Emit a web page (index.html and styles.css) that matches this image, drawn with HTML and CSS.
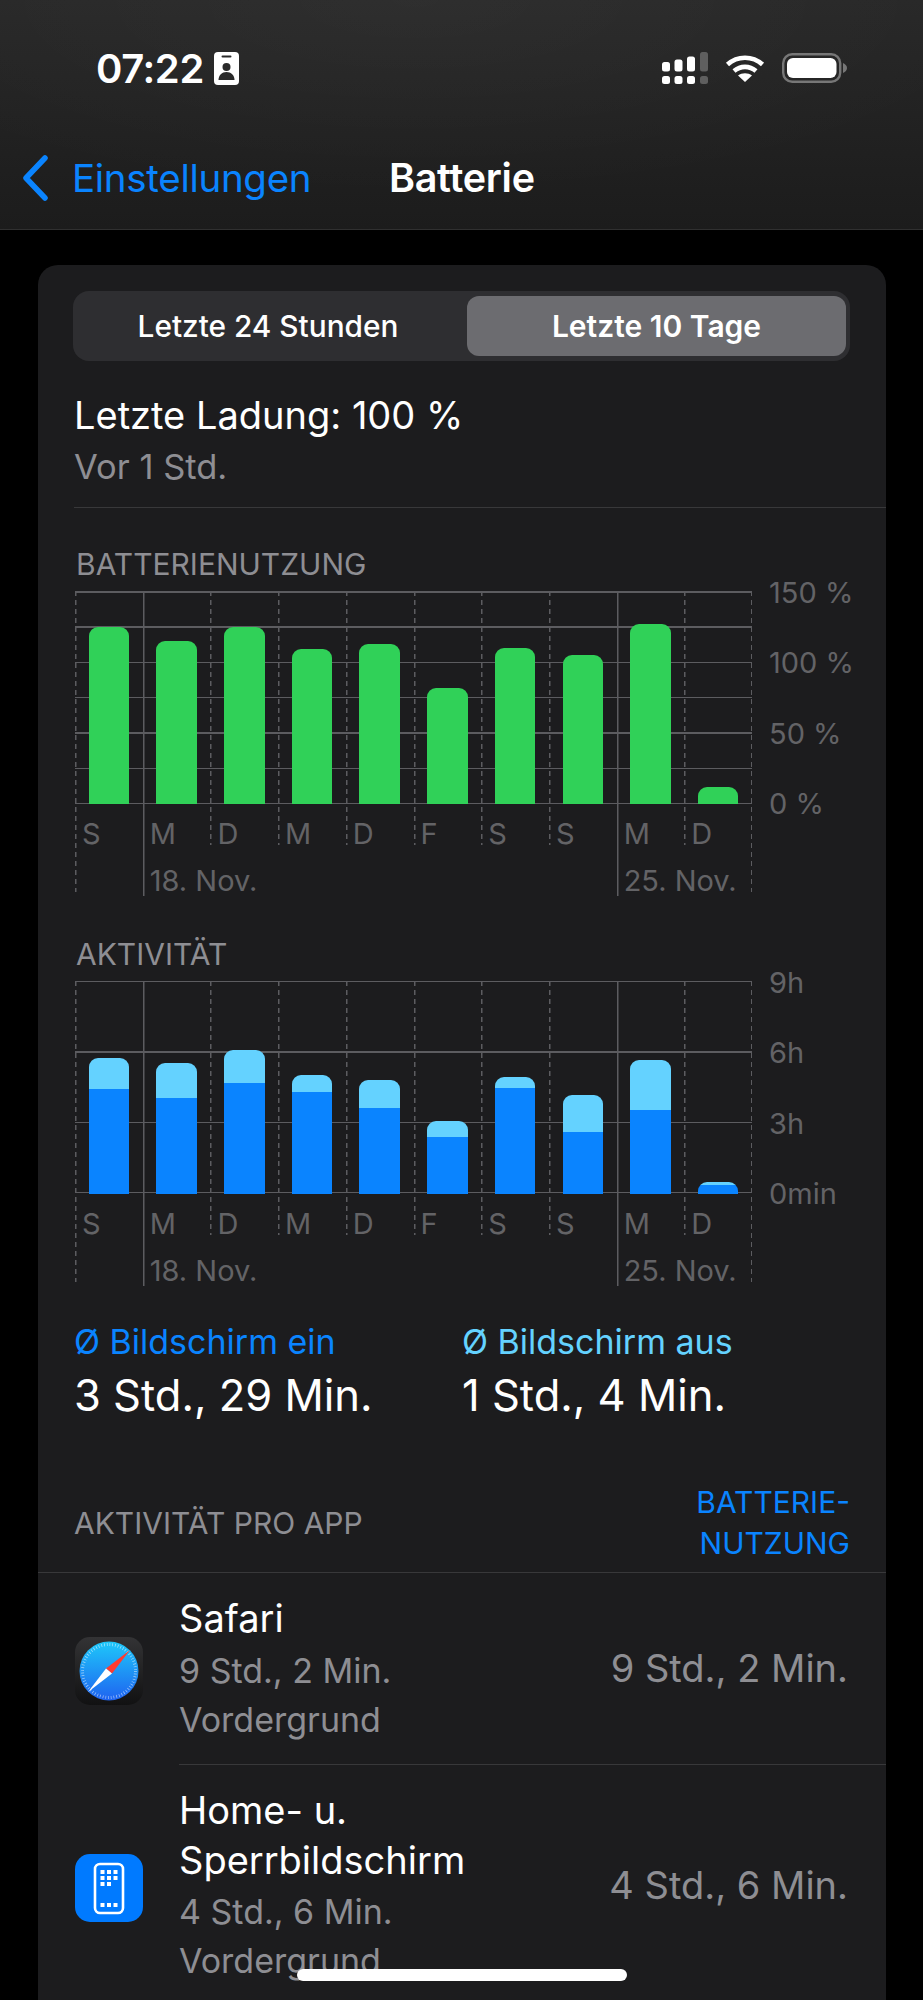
FILE: index.html
```html
<!DOCTYPE html>
<html lang="de">
<head>
<meta charset="utf-8">
<title>Batterie</title>
<link rel="stylesheet" href="styles.css">
</head>
<body>
<div class="screen">
  <header class="topbar">
    <div class="status">
      <div class="status-left">
        <span class="clock">07:22</span>
        <svg class="badge" viewBox="0 0 25 33" width="25" height="33"><rect width="25" height="33" rx="4" fill="#fff"/><rect x="7.5" y="3.5" width="10" height="2" rx="1" fill="#2a2a2a"/><circle cx="12.5" cy="15" r="4" fill="#2a2a2a"/><path d="M4.5 28c0-5 3.5-8 8-8s8 3 8 8z" fill="#2a2a2a"/></svg>
      </div>
      <div class="status-right">
        <svg class="signal" viewBox="0 0 46 32" width="46" height="32"><g fill="#fff"><rect x="0" y="10" width="8" height="9.500" rx="2.500"/><rect x="12.500" y="7.500" width="8" height="12" rx="2.500"/><rect x="25" y="4.500" width="8" height="15" rx="2.500"/><rect x="0" y="24" width="8" height="8" rx="2.500"/><rect x="12.500" y="24" width="8" height="8" rx="2.500"/><rect x="25" y="24" width="8" height="8" rx="2.500"/></g><g fill="#5f5f5f"><rect x="38" y="0" width="8" height="19.500" rx="2.500"/><rect x="38" y="24" width="8" height="8" rx="2.500"/></g></svg>
        <svg class="wifi" viewBox="0 0 40 30" width="40" height="30"><g fill="none" stroke="#fff" stroke-width="4.600"><path d="M2.500 11.500c10-9 25-9 35 0"/><path d="M9 18c6.500-5.500 15.500-5.500 22 0"/></g><path d="M20 29l-7-6.500c4-3 10-3 14 0z" fill="#fff"/></svg>
        <svg class="battery" viewBox="0 0 65 30" width="65" height="30"><rect x="1.200" y="1.200" width="57" height="27.600" rx="9" fill="none" stroke="#777" stroke-width="2.400"/><rect x="5" y="5" width="49.500" height="20" rx="6" fill="#fff"/><path d="M61 10c2.500 1 4 3 4 5s-1.500 4-4 5z" fill="#777"/></svg>
      </div>
    </div>
    <nav class="navbar">
      <svg class="chevron" viewBox="0 0 28 46" width="28" height="46"><path d="M24 3L5 23l19 20" fill="none" stroke="#0a84ff" stroke-width="5.500" stroke-linecap="round" stroke-linejoin="round"/></svg>
      <span class="back">Einstellungen</span>
      <span class="title">Batterie</span>
    </nav>
  </header>

  <main class="card">
    <div class="segments">
      <div class="segment">Letzte 24 Stunden</div>
      <div class="segment segment-on">Letzte 10 Tage</div>
    </div>
    <div class="charge">
      <div class="charge-main">Letzte Ladung: 100 %</div>
      <div class="charge-sub">Vor 1 Std.</div>
    </div>

    <section class="chart-block">
      <h2 class="chart-title">BATTERIENUTZUNG</h2>
      <div class="chart">
        <div class="days days-battery">
          <div class="day day-long"><div class="plot"><div class="bar green" style="height:177px"></div></div><div class="dow">S</div></div>
          <div class="day day-week"><div class="plot"><div class="bar green" style="height:163px"></div></div><div class="dow">M</div><div class="month">18. Nov.</div></div>
          <div class="day"><div class="plot"><div class="bar green" style="height:177px"></div></div><div class="dow">D</div></div>
          <div class="day"><div class="plot"><div class="bar green" style="height:155px"></div></div><div class="dow">M</div></div>
          <div class="day"><div class="plot"><div class="bar green" style="height:160px"></div></div><div class="dow">D</div></div>
          <div class="day"><div class="plot"><div class="bar green" style="height:116px"></div></div><div class="dow">F</div></div>
          <div class="day"><div class="plot"><div class="bar green" style="height:156px"></div></div><div class="dow">S</div></div>
          <div class="day"><div class="plot"><div class="bar green" style="height:149px"></div></div><div class="dow">S</div></div>
          <div class="day day-week"><div class="plot"><div class="bar green" style="height:180px"></div></div><div class="dow">M</div><div class="month">25. Nov.</div></div>
          <div class="day day-last"><div class="plot"><div class="bar green" style="height:17px"></div></div><div class="dow">D</div></div>
        </div>
        <div class="axis"><span>150 %</span><span>100 %</span><span>50 %</span><span>0 %</span></div>
      </div>
    </section>

    <section class="chart-block chart-block-second">
      <h2 class="chart-title">AKTIVITÄT</h2>
      <div class="chart">
        <div class="days days-activity">
          <div class="day day-long"><div class="plot"><div class="bar stack"><i class="light" style="height:31px"></i><i class="blue" style="height:105px"></i></div></div><div class="dow">S</div></div>
          <div class="day day-week"><div class="plot"><div class="bar stack"><i class="light" style="height:35px"></i><i class="blue" style="height:96px"></i></div></div><div class="dow">M</div><div class="month">18. Nov.</div></div>
          <div class="day"><div class="plot"><div class="bar stack"><i class="light" style="height:33px"></i><i class="blue" style="height:111px"></i></div></div><div class="dow">D</div></div>
          <div class="day"><div class="plot"><div class="bar stack"><i class="light" style="height:17px"></i><i class="blue" style="height:102px"></i></div></div><div class="dow">M</div></div>
          <div class="day"><div class="plot"><div class="bar stack"><i class="light" style="height:28px"></i><i class="blue" style="height:86px"></i></div></div><div class="dow">D</div></div>
          <div class="day"><div class="plot"><div class="bar stack"><i class="light" style="height:16px"></i><i class="blue" style="height:57px"></i></div></div><div class="dow">F</div></div>
          <div class="day"><div class="plot"><div class="bar stack"><i class="light" style="height:11px"></i><i class="blue" style="height:106px"></i></div></div><div class="dow">S</div></div>
          <div class="day"><div class="plot"><div class="bar stack"><i class="light" style="height:37px"></i><i class="blue" style="height:62px"></i></div></div><div class="dow">S</div></div>
          <div class="day day-week"><div class="plot"><div class="bar stack"><i class="light" style="height:50px"></i><i class="blue" style="height:84px"></i></div></div><div class="dow">M</div><div class="month">25. Nov.</div></div>
          <div class="day day-last"><div class="plot"><div class="bar stack"><i class="light" style="height:3px"></i><i class="blue" style="height:9px"></i></div></div><div class="dow">D</div></div>
        </div>
        <div class="axis"><span>9h</span><span>6h</span><span>3h</span><span>0min</span></div>
      </div>
    </section>

    <section class="averages">
      <div class="average">
        <div class="average-label label-on">Ø Bildschirm ein</div>
        <div class="average-value">3 Std., 29 Min.</div>
      </div>
      <div class="average">
        <div class="average-label label-off">Ø Bildschirm aus</div>
        <div class="average-value">1 Std., 4 Min.</div>
      </div>
    </section>

    <div class="apps-head">
      <span class="apps-title">AKTIVITÄT PRO APP</span>
      <span class="apps-link">BATTERIE-<br>NUTZUNG</span>
    </div>

    <div class="app-row app-row-safari">
      <svg class="app-icon" viewBox="0 0 68 68" width="68" height="68">
        <defs>
          <linearGradient id="tile" x1="0" y1="0" x2="0" y2="1"><stop offset="0" stop-color="#333335"/><stop offset="1" stop-color="#111112"/></linearGradient>
          <linearGradient id="dial" x1="0" y1="0" x2="0" y2="1"><stop offset="0" stop-color="#1ec8fa"/><stop offset="1" stop-color="#1f63f0"/></linearGradient>
        </defs>
        <rect width="68" height="68" rx="15" fill="url(#tile)"/>
        <circle cx="34" cy="34" r="29.500" fill="url(#dial)"/>
        <circle cx="34" cy="34" r="26.500" fill="none" stroke="#fff" stroke-opacity=".6" stroke-width="3" stroke-dasharray="0.700 2.070"/>
        <path d="M55 13L37 36.500 31 31.500z" fill="#ff3b30"/>
        <path d="M13 55L31 31.500 37 36.500z" fill="#fff"/>
      </svg>
      <div class="app-body">
        <div class="app-text">
          <div class="app-name">Safari</div>
          <div class="app-meta">9 Std., 2 Min.</div>
          <div class="app-meta">Vordergrund</div>
        </div>
        <div class="app-time">9 Std., 2 Min.</div>
      </div>
    </div>

    <div class="app-row app-row-home">
      <svg class="app-icon" viewBox="0 0 68 68" width="68" height="68">
        <rect width="68" height="68" rx="15" fill="#007aff"/>
        <rect x="20" y="10" width="28" height="49" rx="5" fill="none" stroke="#fff" stroke-width="2.600"/>
        <g fill="#fff">
          <rect x="25.500" y="16" width="4" height="4"/><rect x="32" y="16" width="4" height="4"/><rect x="38.500" y="16" width="4" height="4"/>
          <rect x="25.500" y="22" width="4" height="4"/><rect x="32" y="22" width="4" height="4"/><rect x="38.500" y="22" width="4" height="4"/>
          <rect x="25.500" y="28" width="4" height="4"/><rect x="32" y="28" width="4" height="4"/>
          <rect x="25.500" y="49" width="4" height="4"/><rect x="32" y="49" width="4" height="4"/><rect x="38.500" y="49" width="4" height="4"/>
        </g>
      </svg>
      <div class="app-body">
        <div class="app-text">
          <div class="app-name">Home- u.<br>Sperrbildschirm</div>
          <div class="app-meta">4 Std., 6 Min.</div>
          <div class="app-meta">Vordergrund</div>
        </div>
        <div class="app-time">4 Std., 6 Min.</div>
      </div>
    </div>
  </main>
  <div class="home-indicator"></div>
</div>
</body>
</html>
```
FILE: styles.css
```css
* { box-sizing: border-box; }
html, body { margin: 0; padding: 0; background: #000; }
body { font-family: Inter, "Liberation Sans", sans-serif; color: #fff; }
.screen { position: relative; width: 923px; height: 2000px; overflow: hidden; background: #000; }

.topbar {
  height: 230px;
  background: radial-gradient(ellipse 620px 200px at 45% 0, rgba(255,255,255,.03), transparent), linear-gradient(#282828, #1c1c1c);
  border-bottom: 1px solid #303030;
}
.status { height: 143px; padding: 52px 76px 0 96px; display: flex; justify-content: space-between; align-items: flex-start; }
.status-left { display: flex; align-items: center; gap: 10px; }
.clock { font-size: 40px; line-height: 33px; font-weight: 600; letter-spacing: -.4px; }
.badge { display: block; }
.status-right { display: flex; align-items: center; gap: 17px; }
.signal, .wifi, .battery { display: block; }

.navbar { position: relative; height: 70px; display: flex; align-items: center; padding-left: 21px; }
.chevron { display: block; margin-right: 23px; }
.back { font-size: 38.5px; color: #0a84ff; letter-spacing: -.3px; }
.title { position: absolute; left: 389px; font-size: 39.5px; font-weight: 600; letter-spacing: -.3px; }

.card { width: 848px; margin: 35px 0 0 38px; height: 1800px; background: #1c1c1e; border-radius: 20px 20px 0 0; padding-top: 26px; }

.segments { margin-left: 35px; width: 777px; height: 70px; padding: 5px 4px; background: #2e2e31; border-radius: 16px; display: flex; }
.segment { flex: 1 1 0; display: flex; align-items: center; justify-content: center; padding-right: 8px; font-size: 29.8px; font-weight: 500; border-radius: 12px; }
.segment-on { background: #6c6c70; font-weight: 600; font-size: 30px; flex: 0 0 379px; padding-right: 0; }

.charge { margin-left: 36px; padding-top: 32px; height: 147px; border-bottom: 1px solid #38383a; }
.charge-main { font-size: 38px; line-height: 44px; }
.charge-sub { font-size: 34.5px; line-height: 40px; margin-top: 10px; color: #8e8e93; }

.chart-block { margin-left: 37px; padding-top: 39px; }
.chart-block-second { padding-top: 40px; }
.chart-title { margin: 0 0 0 1px; font-size: 30px; line-height: 34px; font-weight: 400; color: #8e8e93; }
.chart { display: flex; margin-top: 10px; height: 306px; }
.days { display: flex; width: 677px; flex: 0 0 auto; }
.day {
  flex: 1 1 0; min-width: 0; height: 254px;
  background: repeating-linear-gradient(to bottom, #5c5c60 0 5px, transparent 5px 9px) 0 0 / 1.5px 254px no-repeat;
}
.day-long { height: 301px; background-size: 1.5px 301px; }
.day-week { height: 305px; background: linear-gradient(#5c5c60, #5c5c60) 0 0 / 1.5px 305px no-repeat; }
.day-last {
  height: 301px;
  background:
    repeating-linear-gradient(to bottom, #5c5c60 0 5px, transparent 5px 9px) 0 0 / 1.5px 254px no-repeat,
    repeating-linear-gradient(to bottom, #5c5c60 0 5px, transparent 5px 9px) 100% 0 / 1.5px 301px no-repeat;
}
.plot { height: 212.5px; padding-left: 13.6px; display: flex; align-items: flex-end; }
.days-battery .plot { background: repeating-linear-gradient(to bottom, #5c5c60 0 1.5px, transparent 1.5px 35.33px); }
.days-activity .plot { background: repeating-linear-gradient(to bottom, #5c5c60 0 1.5px, transparent 1.5px 70.33px); }
.bar { width: 40.5px; border-radius: 9px 9px 0 0; overflow: hidden; }
.bar.green { background: #30d158; }
.bar.stack { display: flex; flex-direction: column; }
.light { display: block; background: #64d2ff; }
.blue { display: block; background: #0a84ff; }
.dow { font-size: 29px; line-height: 42px; height: 51px; padding: 9px 0 0 7px; color: #636366; }
.month { font-size: 29px; line-height: 34px; margin-top: 9px; padding-left: 7px; color: #636366; white-space: nowrap; }
.axis { margin-left: 17px; height: 243px; margin-top: -14px; display: flex; flex-direction: column; justify-content: space-between; font-size: 29px; line-height: 32px; color: #636366; white-space: nowrap; }

.averages { margin-left: 36px; padding-top: 35px; display: flex; }
.average { flex: 0 0 388px; }
.average-label { font-size: 34px; line-height: 40px; }
.label-on { color: #0a84ff; }
.label-off { color: #64d2ff; }
.average-value { font-size: 43.5px; line-height: 50px; margin-top: 8px; }

.apps-head { margin-top: 53px; height: 100px; padding: 0 36px 0 36px; display: flex; justify-content: space-between; align-items: center; border-bottom: 1px solid #38383a; }
.apps-title { font-size: 30px; color: #8e8e93; }
.apps-link { font-size: 30px; line-height: 41px; color: #0a84ff; text-align: right; }

.app-row { display: flex; align-items: center; }
.app-row-safari { height: 191.5px; }
.app-row-home { height: 240px; }
.app-row-safari .app-icon { margin-top: 4px; }
.app-row-home .app-icon { margin-top: 6px; }
.app-icon { display: block; margin-left: 37px; flex: 0 0 auto; }
.app-body { margin-left: 36px; flex: 1 1 auto; align-self: stretch; display: flex; align-items: center; justify-content: space-between; padding-right: 38px; }
.app-row-safari .app-body { border-bottom: 1px solid #38383a; }
.app-text { align-self: flex-start; padding-top: 20px; }
.app-row-home .app-text { padding-top: 20px; }
.app-name { font-size: 38px; line-height: 50px; margin-bottom: 2.5px; }
.app-meta { font-size: 34px; line-height: 49px; color: #8e8e93; }
.app-time { font-size: 38px; color: #8e8e93; white-space: nowrap; }

.home-indicator { position: absolute; left: 297px; top: 1969px; width: 330px; height: 12px; border-radius: 6px; background: #fff; }
```
